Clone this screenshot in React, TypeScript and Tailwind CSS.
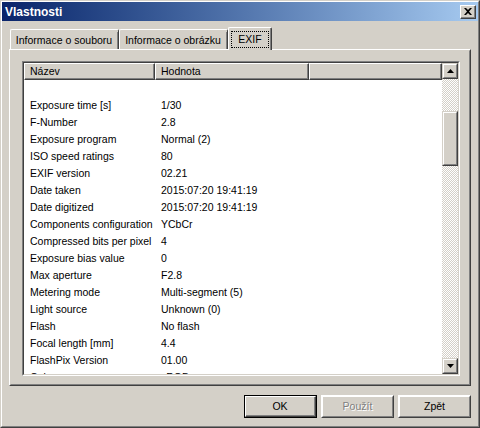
import React from 'react';

const ROWS: [string, string][] = [
  ['', ''],
  ['Exposure time [s]', '1/30'],
  ['F-Number', '2.8'],
  ['Exposure program', 'Normal (2)'],
  ['ISO speed ratings', '80'],
  ['EXIF version', '02.21'],
  ['Date taken', '2015:07:20 19:41:19'],
  ['Date digitized', '2015:07:20 19:41:19'],
  ['Components configuration', 'YCbCr'],
  ['Compressed bits per pixel', '4'],
  ['Exposure bias value', '0'],
  ['Max aperture', 'F2.8'],
  ['Metering mode', 'Multi-segment (5)'],
  ['Light source', 'Unknown (0)'],
  ['Flash', 'No flash'],
  ['Focal length [mm]', '4.4'],
  ['FlashPix Version', '01.00'],
  ['Color space', 'sRGB'],
];

// classic raised 3d box: outer light/dark, inner white/gray
function Raised({ className = '', children }: { className?: string; children?: React.ReactNode }) {
  return (
    <div className={`border border-t-[#d4d0c8] border-l-[#d4d0c8] border-r-[#404040] border-b-[#404040] bg-[#d4d0c8] ${className}`}>
      <div className="w-full h-full border border-t-white border-l-white border-r-[#808080] border-b-[#808080] flex items-center justify-center">
        {children}
      </div>
    </div>
  );
}

function Arrow({ up }: { up?: boolean }) {
  return (
    <svg width="7" height="4" viewBox="0 0 7 4">
      {up ? <path d="M3.5 0 L7 4 L0 4 Z" fill="#000" /> : <path d="M0 0 L7 0 L3.5 4 Z" fill="#000" />}
    </svg>
  );
}

function HeaderCell({ w, label }: { w: number; label: string }) {
  return (
    <div style={{ width: w }} className="h-[17px] shrink-0 border border-t-white border-l-white border-r-[#404040] border-b-[#404040] border-r border-b">
      <div className="h-full border-r border-b border-[#808080] pl-[5px] flex items-center">{label}</div>
    </div>
  );
}

export default function App() {
  return (
    <div
      className="w-[480px] h-[428px] bg-[#d4d0c8] text-black text-[10.5px] leading-none border border-t-[#d4d0c8] border-l-[#d4d0c8] border-r-[#404040] border-b-[#404040]"
      style={{ fontFamily: '"Liberation Sans", Arial, sans-serif' }}
    >
      <div className="h-full border border-t-white border-l-white border-r-[#808080] border-b-[#808080] flex flex-col">
        {/* title bar */}
        <div className="h-[19px] shrink-0 bg-gradient-to-r from-[#0a246a] to-[#a6caf0] flex items-center justify-between pl-[3px] pr-[2px]">
          <span className="text-white font-bold text-[12px]">Vlastnosti</span>
          <div className="w-[16px] h-[14px] border border-t-white border-l-white border-r-[#404040] border-b-[#404040] bg-[#d4d0c8]">
            <div className="w-full h-full border-r border-b border-[#808080] flex items-center justify-center">
              <svg width="8" height="7" viewBox="0 0 8 7">
                <path d="M0 0 H2 L4 2 L6 0 H8 L5 3.5 L8 7 H6 L4 5 L2 7 H0 L3 3.5 Z" fill="#000" />
              </svg>
            </div>
          </div>
        </div>

        <div className="flex-1 px-[7px] pt-[6px] flex flex-col">
          {/* tabs */}
          <div className="h-[22px] flex items-end pl-[1px] shrink-0">
            <div className="w-[109px] h-[20px] border-t border-l border-white border-r border-r-[#404040] rounded-t-[2px] flex items-center justify-center pt-[2px]">
              <div className="w-full h-full border-r border-[#808080] flex items-center justify-center">Informace o souboru</div>
            </div>
            <div className="w-[109px] h-[20px] border-t border-l border-white border-r border-r-[#404040] rounded-t-[2px] flex items-center justify-center pt-[2px]">
              <div className="w-full h-full border-r border-[#808080] flex items-center justify-center">Informace o obrázku</div>
            </div>
            <div className="relative z-10 w-[44px] h-[23px] -mb-px bg-[#d4d0c8] border-t border-l border-white border-r border-r-[#404040] rounded-t-[2px]">
              <div className="w-full h-full border-r border-[#808080] pt-[3px] pl-[2px] pr-[1px]">
                <div className="h-[17px] border border-dotted border-black flex items-center justify-center">EXIF</div>
              </div>
            </div>
          </div>

          {/* panel */}
          <div className="h-[337px] shrink-0 border border-t-white border-l-white border-r-[#404040] border-b-[#404040]">
            <div className="h-full border border-[#d4d0c8] border-r-[#808080] border-b-[#808080] pl-[11px] pr-[9px] pt-[10px]">
              {/* list view */}
              <div className="h-[315px] border border-t-[#808080] border-l-[#808080] border-r-white border-b-white">
                <div className="h-full border border-t-[#404040] border-l-[#404040] border-r-[#d4d0c8] border-b-[#d4d0c8] bg-white flex">
                  <div className="w-[418px] h-full overflow-hidden">
                    <div className="flex bg-[#d4d0c8]">
                      <HeaderCell w={131} label="Název" />
                      <HeaderCell w={154} label="Hodnota" />
                      <HeaderCell w={133} label="" />
                    </div>
                    {ROWS.map(([name, value], i) => (
                      <div key={i} className="h-[17px] flex items-center">
                        <div className="w-[131px] pl-[6px] whitespace-nowrap">{name}</div>
                        <div className="pl-[6px] whitespace-nowrap">{value}</div>
                      </div>
                    ))}
                  </div>
                  {/* scrollbar */}
                  <div className="w-[16px] h-full flex flex-col">
                    <Raised className="h-[16px] shrink-0">
                      <Arrow up />
                    </Raised>
                    <div className="flex-1 bg-[repeating-conic-gradient(#ffffff_0_25%,#d4d0c8_0_50%)] bg-[length:2px_2px]">
                      <Raised className="h-[55px] mt-[32px]" />
                    </div>
                    <Raised className="h-[16px] shrink-0">
                      <Arrow />
                    </Raised>
                  </div>
                </div>
              </div>
            </div>
          </div>

          {/* buttons */}
          <div className="flex justify-end gap-[4px] mt-[9px]">
            <div className="w-[73px] h-[23px] border border-black">
              <div className="w-full h-full border border-t-white border-l-white border-r-[#404040] border-b-[#404040]">
                <div className="w-full h-full border-r border-b border-[#808080] flex items-center justify-center">OK</div>
              </div>
            </div>
            <Raised className="w-[73px] h-[23px] !border-t-white !border-l-white">
              <span className="text-[#808080] [text-shadow:1px_1px_0_#ffffff]">Použít</span>
            </Raised>
            <Raised className="w-[73px] h-[23px] !border-t-white !border-l-white">
              <span>Zpět</span>
            </Raised>
          </div>
        </div>
      </div>
    </div>
  );
}
